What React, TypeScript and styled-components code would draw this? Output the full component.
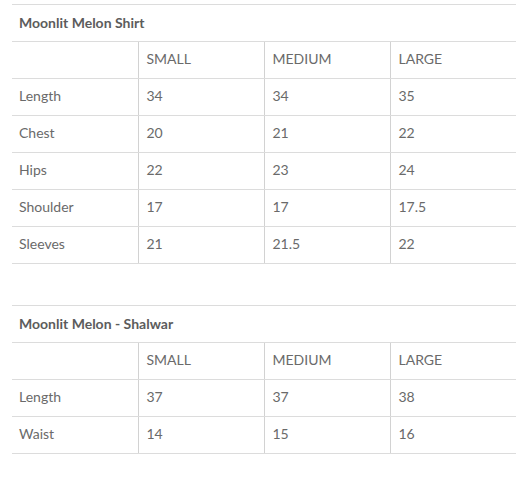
import styled, { createGlobalStyle } from "styled-components";

const GlobalStyle = createGlobalStyle`
  body {
    margin: 0;
    background: #fff;
    font-family: "Lato", "Liberation Sans", sans-serif;
  }
`;

const Page = styled.div`
  padding: 4px 2px 0 12px;
  display: flex;
  flex-direction: column;
  gap: 41px;
`;

const Table = styled.table`
  width: 504px;
  border-collapse: collapse;
  table-layout: fixed;
  border-top: 1px solid #dcdcdc;
`;

const TitleCell = styled.th`
  height: 34px;
  padding: 0 7px 2px;
  text-align: left;
  font-size: 14px;
  font-weight: 700;
  color: #5c5c5c;
  border-bottom: 1px solid #dcdcdc;
`;

const Cell = styled.td<{ $head?: boolean }>`
  height: 33px;
  padding: 0 8px 3px;
  font-size: 14px;
  font-weight: 400;
  color: #6a6a6a;
  border-bottom: 1px solid #dcdcdc;
  border-left: 1px solid #d2d2d2;
  text-transform: ${(p) => (p.$head ? "uppercase" : "none")};

  &:first-child {
    border-left: none;
    padding-left: 7px;
  }
`;

type SizeChart = {
  title: string;
  rows: [string, string, string, string][];
};

const charts: SizeChart[] = [
  {
    title: "Moonlit Melon Shirt",
    rows: [
      ["Length", "34", "34", "35"],
      ["Chest", "20", "21", "22"],
      ["Hips", "22", "23", "24"],
      ["Shoulder", "17", "17", "17.5"],
      ["Sleeves", "21", "21.5", "22"],
    ],
  },
  {
    title: "Moonlit Melon - Shalwar",
    rows: [
      ["Length", "37", "37", "38"],
      ["Waist", "14", "15", "16"],
    ],
  },
];

const sizes = ["Small", "Medium", "Large"];

const App = () => {
  return (
    <>
      <GlobalStyle />
      <Page>
        {charts.map((chart) => (
          <Table key={chart.title}>
            <thead>
              <tr>
                <TitleCell colSpan={4}>{chart.title}</TitleCell>
              </tr>
            </thead>
            <tbody>
              <tr>
                <Cell $head></Cell>
                {sizes.map((s) => (
                  <Cell $head key={s}>
                    {s}
                  </Cell>
                ))}
              </tr>
              {chart.rows.map((row) => (
                <tr key={row[0]}>
                  {row.map((v, i) => (
                    <Cell key={i}>{v}</Cell>
                  ))}
                </tr>
              ))}
            </tbody>
          </Table>
        ))}
      </Page>
    </>
  );
};

export default App;
